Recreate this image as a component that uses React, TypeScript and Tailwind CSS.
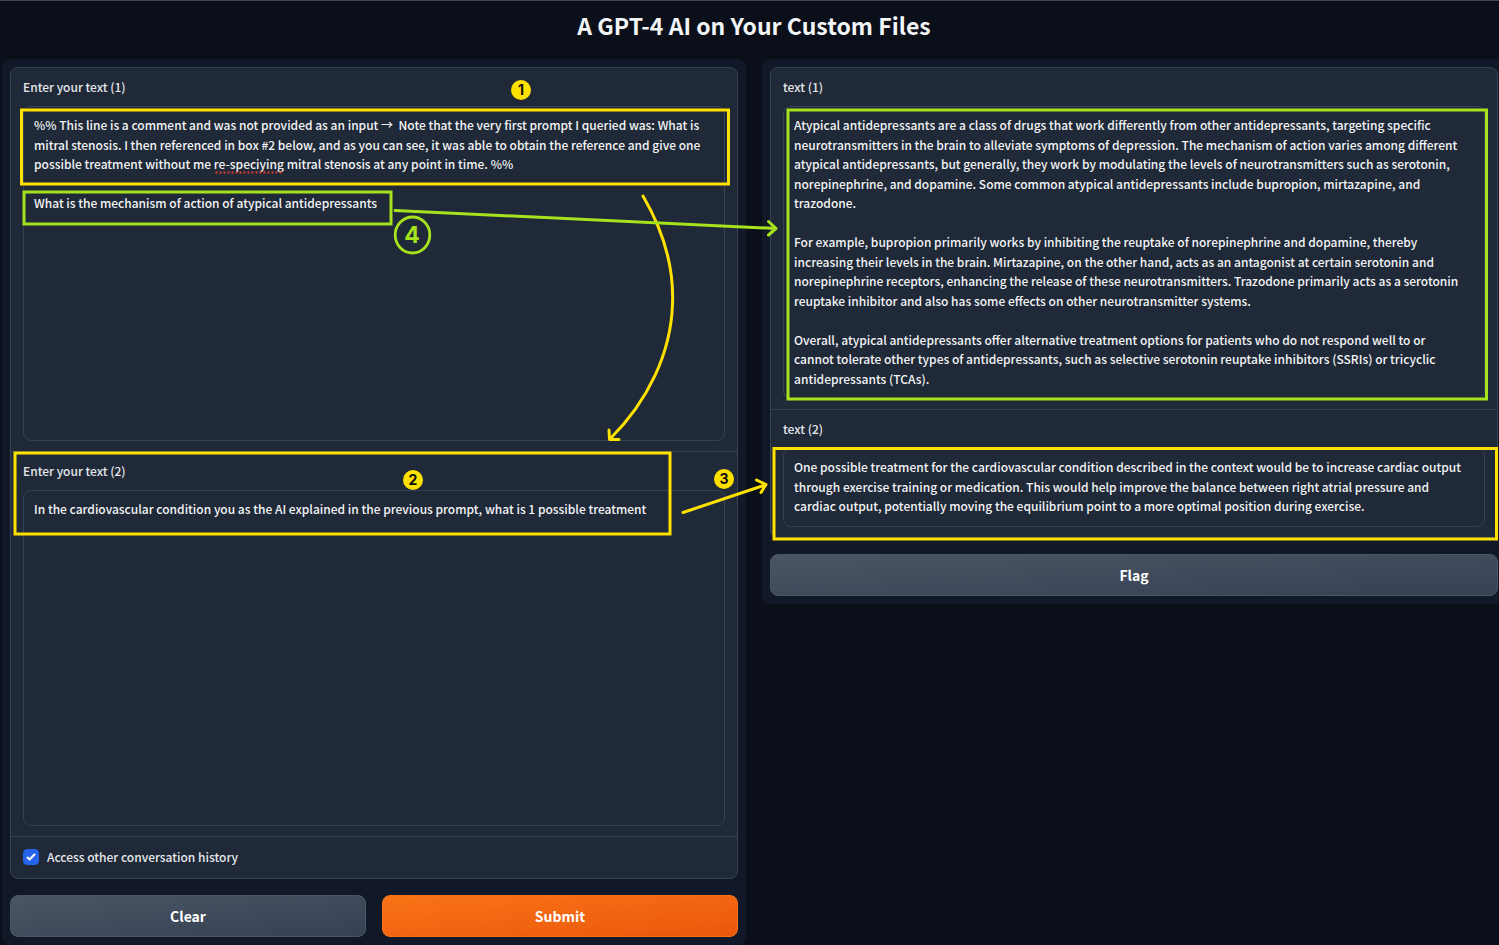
import { useState } from "react";
import type { ReactNode } from "react";

const promptOne = `%% This line is a comment and was not provided as an input →  Note that the very first prompt I queried was: What is mitral stenosis. I then referenced in box #2 below, and as you can see, it was able to obtain the reference and give one possible treatment without me re-speciying mitral stenosis at any point in time. %%

What is the mechanism of action of atypical antidepressants`;

const promptTwo =
  "In the cardiovascular condition you as the AI explained in the previous prompt, what is 1 possible treatment";

const answerOne = `Atypical antidepressants are a class of drugs that work differently from other antidepressants, targeting specific neurotransmitters in the brain to alleviate symptoms of depression. The mechanism of action varies among different atypical antidepressants, but generally, they work by modulating the levels of neurotransmitters such as serotonin, norepinephrine, and dopamine. Some common atypical antidepressants include bupropion, mirtazapine, and trazodone.

For example, bupropion primarily works by inhibiting the reuptake of norepinephrine and dopamine, thereby increasing their levels in the brain. Mirtazapine, on the other hand, acts as an antagonist at certain serotonin and norepinephrine receptors, enhancing the release of these neurotransmitters. Trazodone primarily acts as a serotonin reuptake inhibitor and also has some effects on other neurotransmitter systems.

Overall, atypical antidepressants offer alternative treatment options for patients who do not respond well to or cannot tolerate other types of antidepressants, such as selective serotonin reuptake inhibitors (SSRIs) or tricyclic antidepressants (TCAs).`;

const answerTwo =
  "One possible treatment for the cardiovascular condition described in the context would be to increase cardiac output through exercise training or medication. This would help improve the balance between right atrial pressure and cardiac output, potentially moving the equilibrium point to a more optimal position during exercise.";

const YELLOW = "#ffe100";
const GREEN = "#a6e31c";

type FieldProps = {
  id: string;
  label: string;
  value: string;
  height: string;
  onChange?: (value: string) => void;
};

function Field({ id, label, value, height, onChange }: FieldProps) {
  return (
    <div className="flex flex-col gap-[9px] bg-[#1f2937] px-3 pt-[9px] pb-2.5">
      <label htmlFor={id} className="leading-5 text-gray-200">
        {label}
      </label>
      <textarea
        id={id}
        value={value}
        readOnly={!onChange}
        spellCheck={false}
        onChange={(e) => onChange?.(e.target.value)}
        className={`block w-full resize-none overflow-hidden rounded-lg border border-gray-700 bg-[#1f2937] py-2 pr-5 pl-2.5 leading-relaxed text-gray-100 outline-none ${height}`}
      />
    </div>
  );
}

function Card({ children }: { children: ReactNode }) {
  return (
    <div className="flex flex-col gap-px overflow-hidden rounded-lg border border-gray-700 bg-gray-700">
      {children}
    </div>
  );
}

const buttonBase = "h-[42px] flex-1 rounded-lg border bg-linear-to-br text-sm font-bold text-white";
const secondary = `${buttonBase} border-gray-600 from-gray-600 to-gray-700`;
const primary = `${buttonBase} border-[#f97316] from-[#f97316] to-[#ea580c]`;

function Badge({ x, y, n }: { x: number; y: number; n: number }) {
  return (
    <g>
      <circle cx={x} cy={y} r={10} fill={YELLOW} />
      <text x={x} y={y + 5} textAnchor="middle" fill="#0b0b0b" className="font-[Inter,sans-serif] text-[14px] font-bold">
        {n}
      </text>
    </g>
  );
}

function PromptNotes() {
  return (
    <svg
      viewBox="2 59 800 500"
      width="800"
      height="500"
      fill="none"
      strokeLinecap="round"
      strokeLinejoin="round"
      className="pointer-events-none absolute top-0 left-0 z-10 max-w-none overflow-visible"
    >
      <path d="M216.500 172.500H284" stroke="#d03a34" strokeWidth="2.4" strokeDasharray="0 4" />
      <g strokeWidth="3" stroke={YELLOW} strokeLinejoin="miter">
        <rect x="21.5" y="110" width="707" height="74" />
        <rect x="15" y="453" width="655" height="81" />
      </g>
      <g strokeWidth="3" stroke={YELLOW}>
        <path d="M643 196C664 232 674 268 672.500 304C671 353 648 401 610 439M609 430L609.500 439.500L619 439.500" />
        <path d="M683 512.500L765 485M756.500 480L766 484.500L761 492.500" />
      </g>
      <g strokeWidth="3" stroke={GREEN}>
        <rect x="24" y="192" width="367" height="32" strokeLinejoin="miter" />
        <path d="M395 210.500L776 228.500M768.500 221.500L776 228.500L768.500 235" />
        <ellipse cx="412.500" cy="235" rx="17.300" ry="18" strokeWidth="2.800" />
      </g>
      <text x="412" y="243" textAnchor="middle" fill={GREEN} className="font-[Inter,sans-serif] text-[23px] font-bold">
        4
      </text>
      <Badge x={521} y={90} n={1} />
      <Badge x={413} y={480} n={2} />
      <Badge x={724} y={479} n={3} />
    </svg>
  );
}

function AnswerNotes() {
  return (
    <svg
      viewBox="762 59 737 500"
      width="737"
      height="500"
      fill="none"
      strokeWidth="3"
      className="pointer-events-none absolute top-0 left-0 z-10 max-w-none"
    >
      <rect x="788" y="110" width="698.500" height="289" stroke={GREEN} />
      <rect x="774" y="448.500" width="722.500" height="90.500" stroke={YELLOW} />
    </svg>
  );
}

export default function App() {
  const [first, setFirst] = useState(promptOne);
  const [second, setSecond] = useState(promptTwo);
  const [history, setHistory] = useState(true);

  return (
    <div className="min-h-screen overflow-hidden border-y border-[#42464f] bg-[#0b0f19] font-['Noto_Sans_CJK_SC',sans-serif] text-[12px] font-medium">
      <div className="-mr-[7px] ml-0.5">
        <h1 className="pt-2 pb-[18px] text-center text-[23px] leading-8 font-bold text-gray-100">
          A GPT-4 AI on Your Custom Files
        </h1>
        <main className="grid grid-cols-2 items-start gap-4">
          <section className="relative flex flex-col gap-4 rounded-lg bg-[#111827] p-2">
            <Card>
              <Field id="in1" label="Enter your text (1)" value={first} onChange={setFirst} height="h-[335px]" />
              <Field id="in2" label="Enter your text (2)" value={second} onChange={setSecond} height="h-[336px]" />
              <label className="flex items-center gap-2 bg-[#1f2937] px-3 pt-2.5 pb-[11px] leading-5 text-gray-200">
                <span className="grid size-4">
                  <input
                    type="checkbox"
                    checked={history}
                    onChange={(e) => setHistory(e.target.checked)}
                    className="col-start-1 row-start-1 size-4 appearance-none rounded border border-gray-700 checked:border-[#2563eb] checked:bg-[#2563eb]"
                  />
                  {history && (
                    <svg viewBox="0 0 16 16" fill="white" className="pointer-events-none col-start-1 row-start-1 size-4">
                      <path d="M12.207 4.793a1 1 0 010 1.414l-5 5a1 1 0 01-1.414 0l-2-2a1 1 0 011.414-1.414L6.500 9.086l4.293-4.293a1 1 0 011.414 0z" />
                    </svg>
                  )}
                </span>
                Access other conversation history
              </label>
            </Card>
            <div className="flex gap-4">
              <button
                type="button"
                className={secondary}
                onClick={() => {
                  setFirst("");
                  setSecond("");
                }}
              >
                Clear
              </button>
              <button type="button" className={primary}>
                Submit
              </button>
            </div>
            <PromptNotes />
          </section>
          <section className="relative flex flex-col gap-4 rounded-lg bg-[#111827] p-2">
            <Card>
              <Field id="out1" label="text (1)" value={answerOne} height="h-[293px]" />
              <Field id="out2" label="text (2)" value={answerTwo} height="h-[79px]" />
            </Card>
            <div className="flex">
              <button type="button" className={secondary}>
                Flag
              </button>
            </div>
            <AnswerNotes />
          </section>
        </main>
      </div>
    </div>
  );
}
